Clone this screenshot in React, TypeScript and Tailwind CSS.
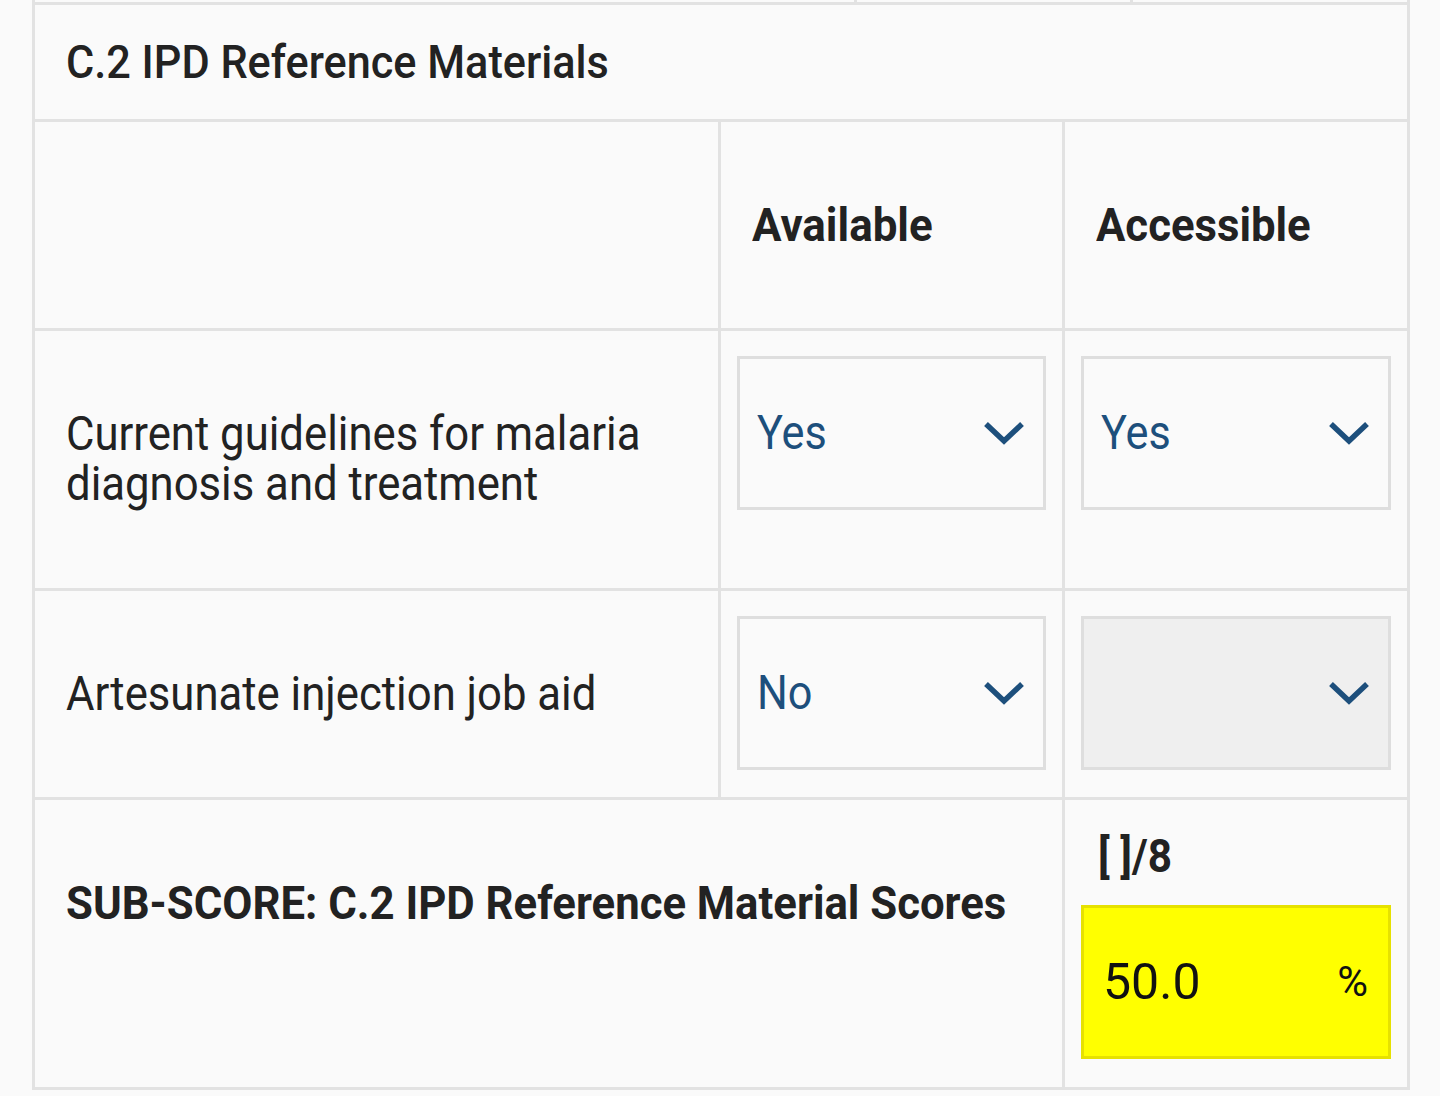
const line = 'border-[#e2e2e2]';

function Select({ value, disabled }: { value?: string; disabled?: boolean }) {
  return (
    <div
      className={`flex h-[154px] items-center justify-between border-[3px] border-[#dedede] pl-[17px] pr-[18px] ${
        disabled ? 'bg-[#efefef]' : 'bg-[#fafafa]'
      }`}
    >
      <span className="inline-block origin-left scale-x-[0.9] text-[48px] leading-[50px] text-[#1d4f7c]">
        {value}
      </span>
      <svg width="42" height="28" viewBox="0 0 42 28" className="text-[#1d4f7c]">
        <path d="M3 5 L21 22 L39 5" fill="none" stroke="currentColor" strokeWidth="5.5" />
      </svg>
    </div>
  );
}

export default function App() {
  return (
    <div className="min-h-screen bg-[#fafafa] font-['Roboto',sans-serif] text-[#222222]">
      <div className={`ml-[32px] w-[1378px] border-x-[3px] ${line}`}>
        {/* tail of the previous table */}
        <div className={`flex h-[5px] border-b-[3px] ${line}`}>
          <div className={`w-[822px] border-r-[3px] ${line}`} />
          <div className={`w-[276px] border-r-[3px] ${line}`} />
          <div className="flex-1" />
        </div>

        <div className={`flex h-[117px] items-center border-b-[3px] pl-[31px] ${line}`}>
          <h2 className="inline-block origin-left scale-x-[0.94] text-[46px] font-medium leading-[50px]">
            C.2 IPD Reference Materials
          </h2>
        </div>

        {/* header */}
        <div className={`grid h-[209px] grid-cols-[686px_344px_1fr] border-b-[3px] ${line}`}>
          <div className={`border-r-[3px] ${line}`} />
          <div className={`border-r-[3px] pl-[31px] pt-[78px] ${line}`}>
            <span className="inline-block origin-left scale-x-[0.955] text-[46px] font-bold leading-[50px]">
              Available
            </span>
          </div>
          <div className="pl-[31px] pt-[78px]">
            <span className="inline-block origin-left scale-x-[0.95] text-[46px] font-bold leading-[50px]">
              Accessible
            </span>
          </div>
        </div>

        {/* row 1 */}
        <div className={`grid h-[260px] grid-cols-[686px_344px_1fr] border-b-[3px] ${line}`}>
          <div className={`border-r-[3px] pl-[31px] pt-[78px] ${line}`}>
            <div className="origin-left scale-x-[0.91] text-[48px] leading-[50px]">
              Current guidelines for malaria
              <br />
              diagnosis and treatment
            </div>
          </div>
          <div className={`border-r-[3px] px-[16px] pt-[25px] ${line}`}>
            <Select value="Yes" />
          </div>
          <div className="px-[16px] pt-[25px]">
            <Select value="Yes" />
          </div>
        </div>

        {/* row 2 */}
        <div className={`grid h-[209px] grid-cols-[686px_344px_1fr] border-b-[3px] ${line}`}>
          <div className={`border-r-[3px] pl-[31px] pt-[78px] ${line}`}>
            <div className="origin-left scale-x-[0.91] text-[48px] leading-[50px]">
              Artesunate injection job aid
            </div>
          </div>
          <div className={`border-r-[3px] px-[16px] pt-[25px] ${line}`}>
            <Select value="No" />
          </div>
          <div className="px-[16px] pt-[25px]">
            <Select disabled />
          </div>
        </div>

        {/* sub-score */}
        <div className={`grid h-[290px] grid-cols-[1030px_1fr] border-b-[3px] ${line}`}>
          <div className={`border-r-[3px] pl-[31px] pt-[78px] ${line}`}>
            <span className="inline-block origin-left scale-x-[0.95] text-[46px] font-bold leading-[50px]">
              SUB-SCORE: C.2 IPD Reference Material Scores
            </span>
          </div>
          <div className="px-[16px] pt-[31px]">
            <div className="pl-[17px]">
              <span className="inline-block origin-left scale-x-[0.92] text-[46px] font-bold leading-[50px]">
                [ ]/8
              </span>
            </div>
            <div className="mt-[24px] flex h-[154px] items-center justify-between border-[3px] border-[#e6e100] bg-[#ffff00] pl-[19px] pr-[20px]">
              <span className="text-[50px] leading-[50px] text-[#111111]">50.0</span>
              <span className="text-[42px] leading-[50px] text-[#111111]">%</span>
            </div>
          </div>
        </div>
      </div>
    </div>
  );
}
